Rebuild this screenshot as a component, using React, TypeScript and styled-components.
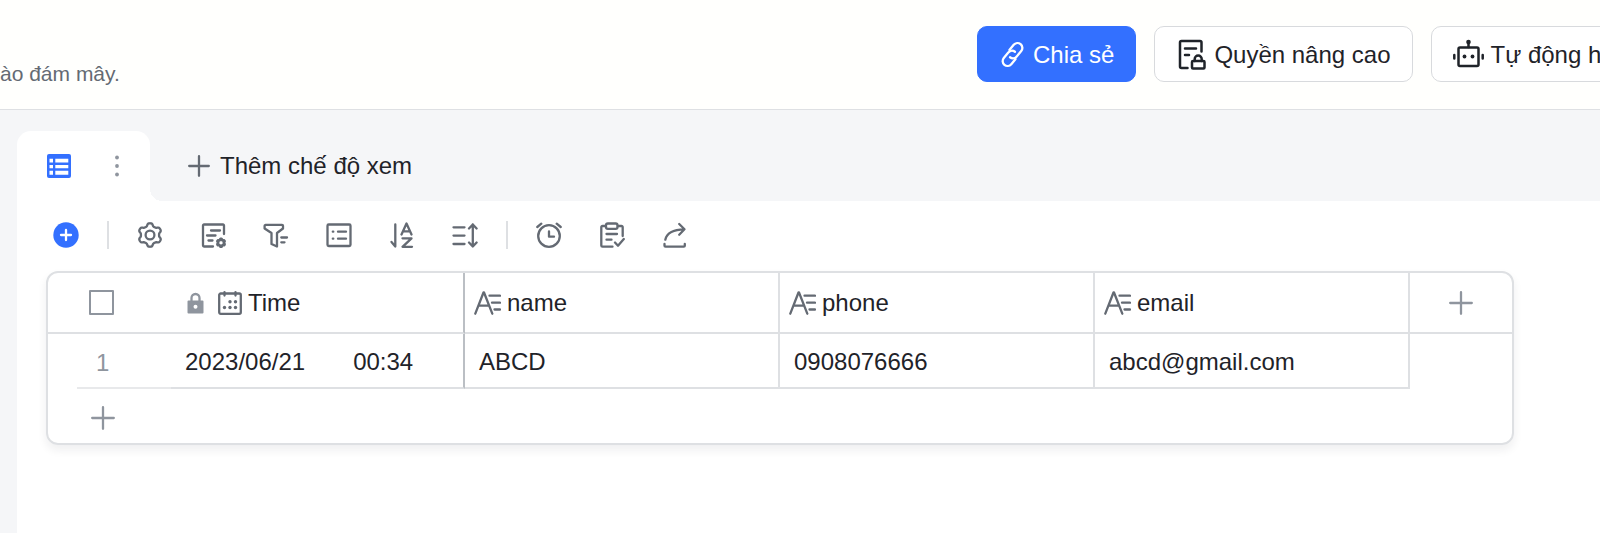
import React from "react";
import styled, { createGlobalStyle } from "styled-components";

const GlobalStyle = createGlobalStyle`
  * { box-sizing: border-box; }
  body {
    margin: 0;
    font-family: "Liberation Sans", Arial, sans-serif;
    font-size: 24px;
    line-height: 32px;
    color: #1f2329;
    background: #ffffff;
  }
  svg { display: block; flex: none; }
`;

const Page = styled.div`
  min-height: 100vh;
  display: flex;
  flex-direction: column;
`;

const Header = styled.header`
  display: flex;
  align-items: flex-start;
  height: 110px;
  padding-top: 26px;
  background: #fffffd;
  border-bottom: 1px solid #dee0e3;
  overflow: hidden;
`;

const SyncNote = styled.p`
  flex: 1;
  margin: 0;
  padding-top: 32px;
  font-size: 21px;
  color: #646a73;
  white-space: nowrap;
`;

const Actions = styled.div`
  flex: 0 0 623px;
  display: flex;
  gap: 18px;
  overflow: hidden;
`;

const ActionButton = styled.button<{ $primary?: boolean }>`
  flex: none;
  display: flex;
  align-items: center;
  gap: 6px;
  height: 56px;
  padding: 1px 21px 0;
  border: 1px solid ${(p) => (p.$primary ? "#3370ff" : "#d8dadd")};
  border-radius: 10px;
  background: ${(p) => (p.$primary ? "#3370ff" : "#ffffff")};
  color: ${(p) => (p.$primary ? "#ffffff" : "#1f2329")};
  font: inherit;
  white-space: nowrap;
  cursor: pointer;
`;

const Workspace = styled.main`
  flex: 1;
  display: flex;
  flex-direction: column;
  padding: 21px 0 0 17px;
  background: #f5f6f8;
`;

const ViewBar = styled.nav`
  display: flex;
  align-items: center;
  height: 70px;
`;

const ViewTab = styled.div`
  position: relative;
  display: flex;
  align-items: center;
  justify-content: space-between;
  width: 133px;
  height: 70px;
  padding: 0 22px 0 29px;
  border-radius: 14px 14px 0 0;
  background: #ffffff;

  &::after {
    content: "";
    position: absolute;
    left: 100%;
    bottom: 0;
    width: 12px;
    height: 12px;
    background: radial-gradient(circle at 100% 0, transparent 12px, #ffffff 12px);
  }
`;

const IconButton = styled.button`
  display: flex;
  align-items: center;
  justify-content: center;
  padding: 0;
  border: 0;
  background: none;
  color: #646a73;
  cursor: pointer;
`;

const AddViewButton = styled(IconButton)`
  gap: 10px;
  margin-left: 38px;
  font: inherit;

  span { color: #1f2329; }
`;

const Panel = styled.section`
  flex: 1;
  padding: 0 86px 40px 29px;
  background: #ffffff;
`;

const Toolbar = styled.div`
  display: flex;
  align-items: center;
  gap: 28px;
  height: 70px;
  padding: 0 7px 2px;
`;

const ToolGroup = styled.div`
  display: flex;
  gap: 37px;
`;

const Divider = styled.span`
  width: 2px;
  height: 28px;
  background: #dee0e3;
`;

const GridFrame = styled.div`
  border: 2px solid #dee0e3;
  border-radius: 12px;
  overflow: hidden;
  box-shadow: 0 5px 10px rgba(31, 35, 41, 0.07);
`;

const Grid = styled.table`
  width: 100%;
  table-layout: fixed;
  border-collapse: separate;
  border-spacing: 0;
`;

const SelectColumn = styled.col`
  width: 123px;
`;
const PinnedColumn = styled.col`
  width: 294px;
`;
const FieldColumn = styled.col`
  width: 315px;
`;

const HeadCell = styled.th<{ $edge?: "pinned" | "field" }>`
  height: 61px;
  padding: 0 0 0 9px;
  font-weight: 400;
  text-align: left;
  border-bottom: 2px solid #dee0e3;
  border-right: ${(p) =>
    p.$edge === "pinned" ? "2px solid #bbbfc4" : p.$edge === "field" ? "2px solid #dee0e3" : "0"};
`;

const HeadSelect = styled(HeadCell)`
  padding: 0 0 0 41px;
`;

const HeadPinned = styled(HeadCell)`
  padding-left: 16px;
`;

const FieldLabel = styled.div`
  display: flex;
  align-items: center;
  gap: 6px;
`;

const LockSlot = styled.span`
  padding-right: 8px;
`;

const Cell = styled.td<{ $edge: "pinned" | "field" }>`
  height: 55px;
  padding: 2px 0 0 14px;
  border-bottom: 2px solid #dee0e3;
  border-right: 2px solid ${(p) => (p.$edge === "pinned" ? "#bbbfc4" : "#dee0e3")};
`;

const DateTime = styled.div`
  display: flex;
  gap: 48px;
`;

const RowNumber = styled.td`
  height: 55px;
  padding: 2px 0 0 48px;
  color: #8f959e;
  background: linear-gradient(#e8e9eb, #e8e9eb) no-repeat right bottom / calc(100% - 29px) 2px;
`;

const AddRowCell = styled.td`
  height: 54px;
  padding: 3px 0 0 43px;
`;

const Checkbox = styled.input`
  display: block;
  appearance: none;
  width: 25px;
  height: 25px;
  margin: 0;
  border: 2px solid #8f959e;
  border-radius: 1px;
  background: #ffffff;
`;

const AddButton = styled(IconButton)`
  color: #8f959e;
`;

const AddFieldCell = styled(HeadCell)`
  padding: 0;

  button { margin: 0 auto; }
`;

/* Closed outline of a gear with softly rounded teeth. */
function gearOutline(cx: number, cy: number, radius: number, depth: number) {
  const steps = 120;
  const points: string[] = [];
  for (let i = 0; i < steps; i++) {
    const angle = (i / steps) * Math.PI * 2;
    const r = radius + depth * Math.tanh(1.8 * Math.cos(6 * angle));
    points.push(
      `${(cx + r * Math.sin(angle)).toFixed(2)} ${(cy - r * Math.cos(angle)).toFixed(2)}`
    );
  }
  return `M${points.join("L")}Z`;
}

type IconProps = { w?: number; h?: number; stroke?: number; children: React.ReactNode };

function Icon({ w = 26, h = 26, stroke = 2.3, children }: IconProps) {
  return (
    <svg
      width={w}
      height={h}
      viewBox={`0 0 ${w} ${h}`}
      fill="none"
      stroke="currentColor"
      strokeWidth={stroke}
      strokeLinecap="round"
      strokeLinejoin="round"
      aria-hidden="true"
    >
      {children}
    </svg>
  );
}

const LinkIcon = () => (
  <Icon w={28} h={28}>
    <g transform="translate(13.500 13.500) rotate(40)">
      <path d="M-5.300-1.500V-8.200a4.900 4.900 0 0 1 9.800 0V-1.200a4.900 4.900 0 0 1-4.600 4.900" />
      <path d="M5.300 1.500V8.200a4.900 4.900 0 0 1-9.800 0V1.200a4.900 4.900 0 0 1 4.600-4.900" />
    </g>
  </Icon>
);

const DocLockIcon = () => (
  <Icon w={32} h={32} stroke={2.5}>
    <path d="M25.500 12.500V3.500a1.500 1.500 0 0 0-1.500-1.500H5.500A1.500 1.500 0 0 0 4 3.500V27.500A1.500 1.500 0 0 0 5.500 29H11.500" />
    <path d="M9 9.500H20M9 16H13" />
    <rect x="16" y="22" width="12.500" height="7.500" rx="1" />
    <path d="M18.700 22V20a3.500 3.500 0 0 1 7 0V22" />
  </Icon>
);

const RobotIcon = () => (
  <Icon w={32} h={32} stroke={2.5}>
    <rect x="5.500" y="8.500" width="20" height="18.500" rx="1.500" />
    <path d="M15.500 3.500V8M1.300 16V19.500M29.700 16V19.500" />
    <g fill="currentColor" stroke="none">
      <circle cx="15.500" cy="3" r="2.300" />
      <circle cx="11.500" cy="17.500" r="1.900" />
      <circle cx="19.500" cy="17.500" r="1.900" />
    </g>
  </Icon>
);

const GridViewIcon = () => (
  <svg width="25" height="24" viewBox="0 0 25 24" aria-hidden="true">
    <rect x="1" width="24" height="24" rx="2" fill="#3370ff" />
    <path
      d="M3.500 4.800H7V8.500H3.500zM9.300 4.800H22.300V8.500H9.300zM3.500 11H7V14.300H3.500zM9.300 11H22.300V14.300H9.300zM3.500 16.800H7V20.800H3.500zM9.300 16.800H22.300V20.800H9.300z"
      fill="#ffffff"
    />
  </svg>
);

const KebabIcon = () => (
  <svg width="22" height="24" viewBox="0 0 22 24" fill="#8f959e" aria-hidden="true">
    <circle cx="11" cy="3.500" r="1.900" />
    <circle cx="11" cy="12" r="1.900" />
    <circle cx="11" cy="20.500" r="1.900" />
  </svg>
);

const PlusIcon = ({ size = 24 }: { size?: number }) => (
  <Icon w={size} h={size}>
    <path d={`M${size / 2} 1.200V${size - 1.2}M1.200 ${size / 2}H${size - 1.2}`} />
  </Icon>
);

const AddRecordIcon = () => (
  <svg width="26" height="26" viewBox="0 0 26 26" aria-hidden="true">
    <circle cx="13" cy="13" r="12.700" fill="#3370ff" />
    <path d="M13 8V18M8 13H18" stroke="#ffffff" strokeWidth="2.300" strokeLinecap="round" />
  </svg>
);

const GearIcon = () => (
  <Icon>
    <path d={gearOutline(13, 13, 10.4, 1.4)} />
    <circle cx="13" cy="13" r="4.400" />
  </Icon>
);

const FormGearIcon = () => (
  <Icon>
    <path d="M24 12V3.500A1 1 0 0 0 23 2.500H4A1 1 0 0 0 3 3.500V23.500A1 1 0 0 0 4 24.500H13" />
    <path d="M11 8.500H20M7 13.500H15.500M8.500 18.500H12.500" />
    <path d={gearOutline(21, 20.8, 3.4, 0.6)} strokeWidth="2.600" />
  </Icon>
);

const FilterIcon = () => (
  <Icon>
    <path d="M2.500 2.800H19A1 1 0 0 1 20 3.800V6.500L14 11V24.500L8.500 22V11L1.600 6.500V3.800A1 1 0 0 1 2.500 2.800Z" />
    <path d="M18.300 15.500H24M18.300 20.300H21.500" />
  </Icon>
);

const ListIcon = () => (
  <Icon>
    <rect x="1.500" y="2.500" width="23" height="21.500" rx="1.200" />
    <path d="M12 9.700H20M12 16.700H20M6.800 9.700h.5M6.800 16.700h.5" />
  </Icon>
);

const SortIcon = () => (
  <Icon>
    <path d="M6.300 2.500V24.500L2.500 20" />
    <path d="M12.500 12.500L17.500 1.500L22.500 12.500M14.200 9.300H20.800" />
    <path d="M13.500 16.300H22.500L13.500 24.800H23" />
  </Icon>
);

const RowHeightIcon = () => (
  <Icon>
    <path d="M1.500 5.300H12.500M1.500 13.600H12.500M1.500 22H12.500" />
    <path d="M20.800 2.500V24.500M17 6.500L20.800 2.500L24.600 6.500M17 20.500L20.800 24.500L24.600 20.500" />
  </Icon>
);

const AlarmIcon = () => (
  <Icon>
    <circle cx="13" cy="14" r="10.800" />
    <path d="M13 9.500V14.700H18M1.300 5L5.300 1.700M20.700 1.700L24.700 5" />
  </Icon>
);

const ClipboardIcon = () => (
  <Icon>
    <path d="M6.500 4H3.500A1.200 1.200 0 0 0 2.300 5.200V23.500A1.200 1.200 0 0 0 3.500 24.700H13.500M18.800 4H22.500A1.200 1.200 0 0 1 23.700 5.200V14" />
    <rect x="7" y="1.500" width="11.500" height="5.300" rx="1.800" />
    <path d="M7.500 12H18M7.500 17.700H12.500M16 20.500L19 23.700L24.800 17" />
  </Icon>
);

const ShareIcon = () => (
  <Icon>
    <path d="M3.300 17.700C4.800 10.500 11 7.500 22.500 7.300M17.200 2L22.500 7.300L17.200 12.700" />
    <path d="M2.500 22V23.700A1 1 0 0 0 3.500 24.700H21.800A1 1 0 0 0 22.800 23.700V22" />
  </Icon>
);

const LockIcon = () => (
  <Icon w={17} h={22}>
    <path d="M4.500 9V6a4 4 0 0 1 8 0V9" stroke="#8f959e" />
    <path
      d="M1.500 8.500H15.500A1 1 0 0 1 16.500 9.500V20.500A1 1 0 0 1 15.500 21.500H1.500A1 1 0 0 1 .5 20.500V9.500A1 1 0 0 1 1.500 8.500Z"
      fill="#8f959e"
      stroke="none"
    />
    <circle cx="8.500" cy="14.800" r="2" fill="#ffffff" stroke="none" />
  </Icon>
);

const CalendarIcon = () => (
  <Icon w={24} h={24}>
    <rect x="1.200" y="2.500" width="21.600" height="20.300" rx="1.500" />
    <path d="M6.500 1.200V4.500M17.500 1.200V4.500" />
    <g fill="currentColor" stroke="none">
      <circle cx="12" cy="10.700" r="1.700" />
      <circle cx="17.500" cy="10.700" r="1.700" />
      <circle cx="6.500" cy="16.500" r="1.700" />
      <circle cx="12" cy="16.500" r="1.700" />
      <circle cx="17.500" cy="16.500" r="1.700" />
    </g>
  </Icon>
);

const TextFieldIcon = () => (
  <Icon w={27} h={24}>
    <path d="M1.300 22.700L9.500 1.500H10L18.300 22.700M4.500 14.700H15" />
    <path d="M15.500 4.700H26M18 11.700H26M20.500 18.500H26" />
  </Icon>
);

const FieldIconTone = styled.span`
  color: #646a73;
`;

const viewTools = [
  { label: "Cài đặt", icon: <GearIcon /> },
  { label: "Tùy chỉnh trường", icon: <FormGearIcon /> },
  { label: "Lọc", icon: <FilterIcon /> },
  { label: "Nhóm", icon: <ListIcon /> },
  { label: "Sắp xếp", icon: <SortIcon /> },
  { label: "Chiều cao hàng", icon: <RowHeightIcon /> },
];

const shareTools = [
  { label: "Nhắc nhở", icon: <AlarmIcon /> },
  { label: "Biểu mẫu", icon: <ClipboardIcon /> },
  { label: "Chia sẻ chế độ xem", icon: <ShareIcon /> },
];

const fields = ["name", "phone", "email"] as const;

const records = [
  { date: "2023/06/21", time: "00:34", name: "ABCD", phone: "0908076666", email: "abcd@gmail.com" },
];

export default function App() {
  return (
    <Page>
      <GlobalStyle />
      <Header>
        <SyncNote>ào đám mây.</SyncNote>
        <Actions>
          <ActionButton $primary>
            <LinkIcon />
            Chia sẻ
          </ActionButton>
          <ActionButton>
            <DocLockIcon />
            Quyền nâng cao
          </ActionButton>
          <ActionButton>
            <RobotIcon />
            Tự động h
          </ActionButton>
        </Actions>
      </Header>

      <Workspace>
        <ViewBar>
          <ViewTab>
            <IconButton aria-label="Chế độ xem lưới">
              <GridViewIcon />
            </IconButton>
            <IconButton aria-label="Tùy chọn">
              <KebabIcon />
            </IconButton>
          </ViewTab>
          <AddViewButton>
            <PlusIcon size={22} />
            <span>Thêm chế độ xem</span>
          </AddViewButton>
        </ViewBar>

        <Panel>
          <Toolbar>
            <IconButton aria-label="Thêm bản ghi">
              <AddRecordIcon />
            </IconButton>
            <Divider />
            <ToolGroup>
              {viewTools.map((tool) => (
                <IconButton key={tool.label} aria-label={tool.label}>
                  {tool.icon}
                </IconButton>
              ))}
            </ToolGroup>
            <Divider />
            <ToolGroup>
              {shareTools.map((tool) => (
                <IconButton key={tool.label} aria-label={tool.label}>
                  {tool.icon}
                </IconButton>
              ))}
            </ToolGroup>
          </Toolbar>

          <GridFrame>
            <Grid>
              <colgroup>
                <SelectColumn />
                <PinnedColumn />
                {fields.map((field) => (
                  <FieldColumn key={field} />
                ))}
                <col />
              </colgroup>
              <thead>
                <tr>
                  <HeadSelect>
                    <Checkbox type="checkbox" aria-label="Chọn tất cả" />
                  </HeadSelect>
                  <HeadPinned $edge="pinned">
                    <FieldLabel>
                      <LockSlot>
                        <LockIcon />
                      </LockSlot>
                      <FieldIconTone>
                        <CalendarIcon />
                      </FieldIconTone>
                      Time
                    </FieldLabel>
                  </HeadPinned>
                  {fields.map((field) => (
                    <HeadCell key={field} $edge="field">
                      <FieldLabel>
                        <FieldIconTone>
                          <TextFieldIcon />
                        </FieldIconTone>
                        {field}
                      </FieldLabel>
                    </HeadCell>
                  ))}
                  <AddFieldCell>
                    <AddButton aria-label="Thêm trường">
                      <PlusIcon />
                    </AddButton>
                  </AddFieldCell>
                </tr>
              </thead>
              <tbody>
                {records.map((record, index) => (
                  <tr key={record.phone}>
                    <RowNumber>{index + 1}</RowNumber>
                    <Cell $edge="pinned">
                      <DateTime>
                        <span>{record.date}</span>
                        <span>{record.time}</span>
                      </DateTime>
                    </Cell>
                    {fields.map((field) => (
                      <Cell key={field} $edge="field">
                        {record[field]}
                      </Cell>
                    ))}
                    <td />
                  </tr>
                ))}
                <tr>
                  <AddRowCell colSpan={6}>
                    <AddButton aria-label="Thêm hàng">
                      <PlusIcon />
                    </AddButton>
                  </AddRowCell>
                </tr>
              </tbody>
            </Grid>
          </GridFrame>
        </Panel>
      </Workspace>
    </Page>
  );
}
